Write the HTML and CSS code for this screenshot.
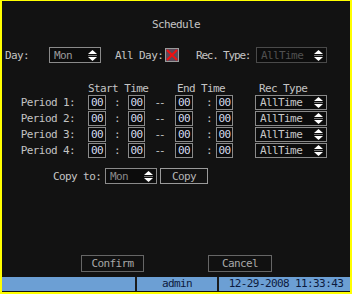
FILE: index.html
```html
<!DOCTYPE html>
<html lang="en">
<head>
  <meta charset="UTF-8" />
  <title>Schedule</title>
  <link rel="stylesheet" href="styles.css">
</head>
<body>
  <div class="screen">
    <div class="title">Schedule</div>

    <div class="day-row">
      <span class="lbl lbl-day">Day:</span>
      <div class="select sel-day">
        <span>Mon</span>
        <svg class="spin" width="9" height="11" viewBox="0 0 9 11"><path d="M4.5 0 L9 4 L0 4 Z" fill="#fff"/><path d="M0 7 L9 7 L4.5 11 Z" fill="#fff"/><rect x="0" y="5" width="9" height="1" fill="#777"/></svg>
      </div>
      <span class="lbl lbl-allday">All Day:</span>
      <span class="check">
        <svg width="14" height="14" viewBox="0 0 14 14"><rect x="0.5" y="0.5" width="13" height="13" fill="#5a4a5a" stroke="#9a9a9a"/><path d="M2 2 L12 12 M12 2 L2 12" stroke="#f01010" stroke-width="2"/></svg>
      </span>
      <span class="lbl lbl-rec">Rec. Type:</span>
      <div class="select sel-rec disabled">
        <span>AllTime</span>
        <svg class="spin" width="9" height="11" viewBox="0 0 9 11"><path d="M4.5 0 L9 4 L0 4 Z" fill="#fff"/><path d="M0 7 L9 7 L4.5 11 Z" fill="#fff"/><rect x="0" y="5" width="9" height="1" fill="#777"/></svg>
      </div>
    </div>

    <div class="periods periods-head">
      <div></div>
      <div class="head head-start">Start Time</div>
      <div></div>
      <div class="head head-end">End Time</div>
      <div></div>
      <div class="head head-rec">Rec Type</div>
    </div>
    <div class="periods" id="periodRows"></div>

    <div class="copy-row">
      <span class="lbl lbl-copy">Copy to:</span>
      <div class="select sel-copy">
        <span>Mon</span>
        <svg class="spin" width="9" height="11" viewBox="0 0 9 11"><path d="M4.5 0 L9 4 L0 4 Z" fill="#fff"/><path d="M0 7 L9 7 L4.5 11 Z" fill="#fff"/><rect x="0" y="5" width="9" height="1" fill="#777"/></svg>
      </div>
      <button class="btn btn-copy">Copy</button>
    </div>

    <div class="buttons">
      <button class="btn btn-confirm">Confirm</button>
      <button class="btn btn-cancel">Cancel</button>
    </div>

    <div class="status">
      <div class="seg seg-blank"></div>
      <div class="seg seg-user">admin</div>
      <div class="seg seg-time">12-29-2008 11:33:43</div>
    </div>
  </div>

  <script>
    const spin = '<svg class="spin" width="9" height="11" viewBox="0 0 9 11"><path d="M4.5 0 L9 4 L0 4 Z" fill="#fff"/><path d="M0 7 L9 7 L4.5 11 Z" fill="#fff"/><rect x="0" y="5" width="9" height="1" fill="#777"/></svg>';
    const rows = document.getElementById("periodRows");
    [1, 2, 3, 4].forEach(n => {
      rows.innerHTML += `
        <div class="lbl lbl-period">Period ${n}:</div>
        <div class="box">00</div>
        <div class="colon">:</div>
        <div class="box">00</div>
        <div class="dash">--</div>
        <div class="box">00</div>
        <div class="colon colon-end">:</div>
        <div class="box">00</div>
        <div></div>
        <div class="select sel-type"><span>AllTime</span>${spin}</div>
      `;
    });
  </script>
</body>
</html>
```

FILE: styles.css
```css
body {
  margin: 0;
  background: #111;
}

.screen {
  width: 352px;
  height: 294px;
  box-sizing: border-box;
  border-top: 1px solid #ff0;
  border-left: 2px solid #ff0;
  border-right: 2px solid #ff0;
  border-bottom: 2px solid #ff0;
  padding-bottom: 1px;
  background: #121212;
  display: flex;
  flex-direction: column;
  font-family: "DejaVu Sans Mono", monospace;
  font-size: 11px;
  letter-spacing: -0.6px;
  color: #c4c4c4;
}

.title {
  margin-top: 17px;
  line-height: 13px;
  text-align: center;
}

.lbl {
  white-space: nowrap;
}

/* day row */
.day-row {
  display: flex;
  align-items: center;
  height: 16px;
  margin-top: 16px;
}

.lbl-day {
  width: 44px;
  margin-left: 3px;
}

.lbl-allday {
  width: 50px;
  margin-left: 14px;
}

.check {
  width: 14px;
  height: 14px;
  display: flex;
}

.lbl-rec {
  width: 60px;
  margin-left: 17px;
  letter-spacing: -1.2px;
}

.select {
  box-sizing: border-box;
  height: 16px;
  border: 1px solid #8a8a8a;
  background: #0c0c0c;
  display: flex;
  align-items: center;
  justify-content: space-between;
  padding: 0 3px 0 4px;
  color: #c8c8c8;
}

.select .spin {
  display: block;
}

.sel-day {
  width: 52px;
  color: #9a9a9a;
}

.sel-rec {
  width: 71px;
}

.disabled {
  border-color: #4a4a4a;
  color: #505050;
}

/* periods */
.periods {
  display: grid;
  grid-template-columns: 86px 18px 22px 17px 30px 18px 23px 17px 22px 72px;
  row-gap: 1px;
  align-items: center;
}

.periods-head {
  margin-top: 19px;
}

.head {
  line-height: 13px;
  text-align: center;
  white-space: nowrap;
}

.head-start {
  grid-column: 2 / 5;
}

.head-end {
  grid-column: 6 / 9;
  padding-right: 6px;
}

.head-rec {
  grid-column: 10;
  text-align: left;
  padding-left: 4px;
}

.lbl-period {
  text-align: right;
  padding-right: 13px;
  line-height: 15px;
}

.box {
  box-sizing: border-box;
  height: 15px;
  border: 1px solid #8a8a8a;
  background: #0a0a0a;
  color: #d4dcec;
  text-align: center;
  line-height: 13px;
}

.colon,
.dash {
  text-align: center;
  line-height: 15px;
}

.colon-end {
  padding-left: 9px;
}

.dash {
  padding-right: 2px;
  letter-spacing: -2px;
}

.sel-type {
  height: 15px;
  width: 72px;
}

/* copy row */
.copy-row {
  display: flex;
  align-items: center;
  height: 16px;
  margin-top: 10px;
}

.lbl-copy {
  width: 52px;
  margin-left: 51px;
}

.sel-copy {
  width: 52px;
  color: #8a8a8a;
}

.btn {
  box-sizing: border-box;
  font-family: inherit;
  font-size: 11px;
  letter-spacing: -0.6px;
  background: #111;
  padding: 0;
  cursor: pointer;
}

.btn-copy {
  width: 48px;
  height: 16px;
  margin-left: 3px;
  border: 1px solid #9a9a9a;
  color: #b4b4b4;
}

/* bottom */
.buttons {
  display: flex;
  margin-top: auto;
}

.btn-confirm,
.btn-cancel {
  height: 17px;
  border: 1px solid #666;
  color: #a8a8a8;
}

.btn-confirm {
  width: 63px;
  margin-left: 79px;
}

.btn-cancel {
  width: 64px;
  margin-left: 64px;
}

.status {
  display: flex;
  gap: 2px;
  height: 14px;
  margin-top: 5px;
  background: #1c1c1c;
}

.seg {
  background: #6c9fd4;
  color: #0c1a3e;
  line-height: 14px;
  text-align: center;
}

.seg-blank {
  width: 133px;
}

.seg-user {
  width: 80px;
}

.seg-time {
  flex: 1;
  padding-left: 3px;
}
```
